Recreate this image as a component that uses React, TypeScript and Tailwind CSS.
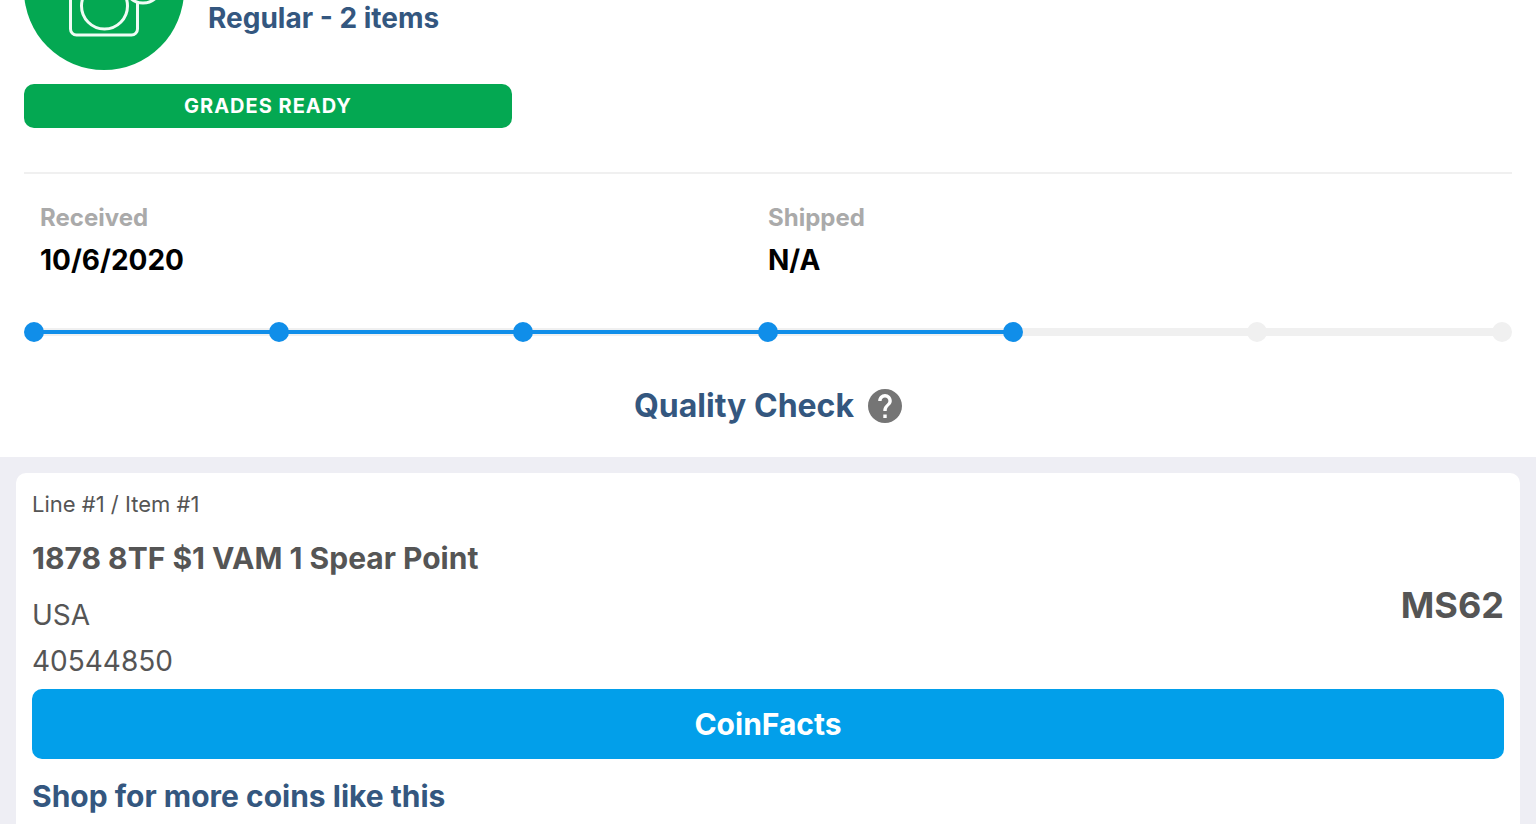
import { clsx } from "clsx";

const steps = ["Arrived", "Entered", "Grading", "Assembly", "Quality Check", "Sealed", "Shipped"];
const currentStep = 4;

const CameraIcon = () => (
  <svg viewBox="0 0 160 160" className="size-40 shrink-0" fill="none" aria-hidden="true">
    <circle cx="80" cy="80" r="80" fill="#04a852" />
    <g stroke="#f0fcf5" strokeWidth="3" strokeLinejoin="round">
      <path d="M113.500 93v26a6 6 0 0 1-6 6H52.500a6 6 0 0 1-6-6V70a6 6 0 0 1 6-6h46" />
      <circle cx="80.500" cy="96" r="23" />
      <circle cx="119" cy="74" r="19" />
    </g>
  </svg>
)

const HelpIcon = () => (
  <svg viewBox="2 2 20 20" className="size-[34px]" fill="#757575" aria-hidden="true">
    <path d="M12 2C6.48 2 2 6.48 2 12s4.48 10 10 10 10-4.48 10-10S17.52 2 12 2zm1 17h-2v-2h2v2zm2.070-7.750l-.9.920C13.450 12.900 13 13.500 13 15h-2v-.5c0-1.100.450-2.100 1.170-2.830l1.240-1.260c.370-.360.590-.860.590-1.410 0-1.100-.9-2-2-2s-2 .9-2 2H8c0-2.210 1.790-4 4-4s4 1.790 4 4c0 .880-.360 1.680-.930 2.250z" />
  </svg>
)

const Progress = () => (
  <ol className="mt-[42px] flex items-center" aria-label="Order progress">
    {steps.map((step, index) => (
      <li key={step} className={clsx("flex items-center", index > 0 && "flex-1")}>
        {index > 0 && (
          <span className="-mx-1 flex h-2 flex-1 items-center bg-[#f0f0f0]">
            {index <= currentStep && <span className="h-1 w-full bg-[#108ee9]" />}
          </span>
        )}
        <span
          aria-label={step}
          className={clsx("relative size-5 rounded-full", index <= currentStep ? "bg-[#108ee9]" : "bg-[#f0f0f0]")}
        />
      </li>
    ))}
  </ol>
)

const DateField = ({ label, value }: { label: string; value: string }) => (
  <div className="flex flex-1 flex-col gap-1.5 font-bold">
    <dt className="text-2xl leading-8 text-[#aaa]">{label}</dt>
    <dd className="text-[28px] leading-10 text-black">{value}</dd>
  </div>
)

const App = () => {
  return (
    <main className="flex min-h-screen flex-col bg-[#eeeef4] font-['Inter',sans-serif] text-[#555]">
      <section className="bg-white px-6 pb-[31px]">
        <div className="flex h-[70px] items-end gap-6 overflow-hidden">
          <CameraIcon />
          <p className="pb-8 text-[28px] leading-10 font-bold text-[#34577f]">Regular - 2 items</p>
        </div>
        <div className="mt-3.5 flex h-11 w-full max-w-[488px] items-center justify-center rounded-[10px] bg-[#04a852] text-xl font-bold tracking-wider text-white">
          GRADES READY
        </div>
        <hr className="mt-11 border-t-2 border-[#f0f0f0]" />
        <dl className="flex px-4 pt-7">
          <DateField label="Received" value="10/6/2020" />
          <DateField label="Shipped" value="N/A" />
        </dl>
        <Progress />
        <div className="mt-11 flex items-center justify-center gap-3.5">
          <h1 className="text-[32px] leading-10 font-bold text-[#34577f]">Quality Check</h1>
          <button type="button" aria-label="About this step">
            <HelpIcon />
          </button>
        </div>
      </section>

      <article className="mx-4 mt-4 flex-1 rounded-t-[10px] bg-white px-4 pt-[15px]">
        <p className="text-[22px] leading-8">Line #1 / Item #1</p>
        <div className="flex items-center justify-between">
          <div className="pt-[18px] pb-2 text-[28px] leading-10">
            <h2 className="mb-[17px] text-[30px] leading-10 font-bold">1878 8TF $1 VAM 1 Spear Point</h2>
            <p className="mb-1.5">USA</p>
            <p>40544850</p>
          </div>
          <p className="text-4xl font-bold">MS62</p>
        </div>
        <button type="button" className="h-[70px] w-full rounded-[10px] bg-[#029fea] text-[30px] font-bold text-white">
          CoinFacts
        </button>
        <a href="#shop" className="mt-[17px] block text-[30px] leading-10 font-bold text-[#34577f]">
          Shop for more coins like this
        </a>
      </article>
    </main>
  )
}

export default App
